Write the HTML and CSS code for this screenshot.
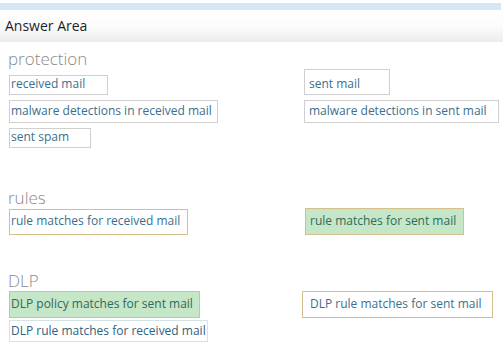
FILE: index.html
```html
<!DOCTYPE html>
<html>
<head>
<meta charset="utf-8">
<link rel="stylesheet" href="styles.css">
</head>
<body>
<div class="strip"></div>
<div class="header">Answer Area</div>
<div class="content">
  <section class="sec sec-protection">
    <h2 class="title">protection</h2>
    <div class="grid grid-protection">
      <div class="box w99 end">received mail</div>
      <div class="box w86 tall right">sent mail</div>
      <div class="box w209 mid">malware detections in received mail</div>
      <div class="box w195 mid right">malware detections in sent mail</div>
      <div class="box w82">sent spam</div>
    </div>
  </section>
  <section class="sec sec-rules">
    <h2 class="title">rules</h2>
    <div class="grid grid-rules">
      <div class="box w179 gold end">rule matches for received mail</div>
      <div class="box w159 green gold big right2">rule matches for sent mail</div>
    </div>
  </section>
  <section class="sec sec-dlp">
    <h2 class="title">DLP</h2>
    <div class="grid grid-dlp">
      <div class="box w191 green gold big">DLP policy matches for sent mail</div>
      <div class="box w191 gold big right0">DLP rule matches for sent mail</div>
      <div class="box w199 pale">DLP rule matches for received mail</div>
    </div>
  </section>
</div>
</body>
</html>
```

FILE: styles.css
```css
* { box-sizing: border-box; }
html, body { margin: 0; padding: 0; background: #ffffff; }
body {
  width: 503px;
  height: 350px;
  overflow: hidden;
  font-family: "Open Sans", "Noto Sans", sans-serif;
  padding-top: 3px;
}
.strip {
  height: 7px;
  margin-right: 2px;
  background: #d5e7f4;
}
.header {
  height: 32px;
  padding: 7px 0 0 5px;
  font-size: 14px;
  line-height: 18px;
  color: #1e1e1e;
  background: linear-gradient(to bottom, #ffffff 0%, #fbfbfb 55%, #ececec 100%);
}
.content { padding-left: 9px; }
.sec-protection { margin-top: 7px; }
.sec-rules { margin-top: 40px; }
.sec-dlp { margin-top: 36px; }
.title {
  margin: 0;
  height: 20px;
  font-size: 17px;
  line-height: 20px;
  font-weight: 300;
  color: #8a8a8a;
  margin-left: -1px;
}
.grid {
  display: grid;
  grid-template-columns: 295px 1fr;
  align-items: start;
}
.grid-protection {
  grid-template-rows: 26px 23px 20px;
  row-gap: 5px;
}
.grid-rules { grid-template-rows: 27px; }
.grid-dlp {
  grid-template-rows: 27px 22px;
  row-gap: 2px;
}
.box {
  height: 20px;
  border: 1px solid #cfcfcf;
  background: #ffffff;
  color: #3b6f8c;
  font-size: 12px;
  line-height: 16px;
  padding: 0 0 0 1px;
  white-space: nowrap;
}
.end { align-self: end; }
.tall { height: 26px; padding-top: 6px; }
.mid { height: 23px; padding-top: 2px; }
.big { height: 27px; padding-top: 4px; }
.right { margin-left: 0; padding-left: 4px; }
.right2 { margin-left: 1px; padding-left: 4px; }
.right0 { margin-left: -2px; padding-left: 7px; }
.gold { border-color: #d5c08c; }
.green { background: #c5e6c7; color: #2f6a5c; }
.pale { height: 22px; padding-top: 2px; border-color: #d4e2ea; color: #2f5f80; }
.w82 { width: 82px; }
.w86 { width: 86px; }
.w99 { width: 99px; }
.w159 { width: 159px; }
.w179 { width: 179px; height: 26px; padding-top: 3px; }
.w191 { width: 191px; }
.w195 { width: 195px; }
.w199 { width: 199px; }
.w209 { width: 209px; }
```
